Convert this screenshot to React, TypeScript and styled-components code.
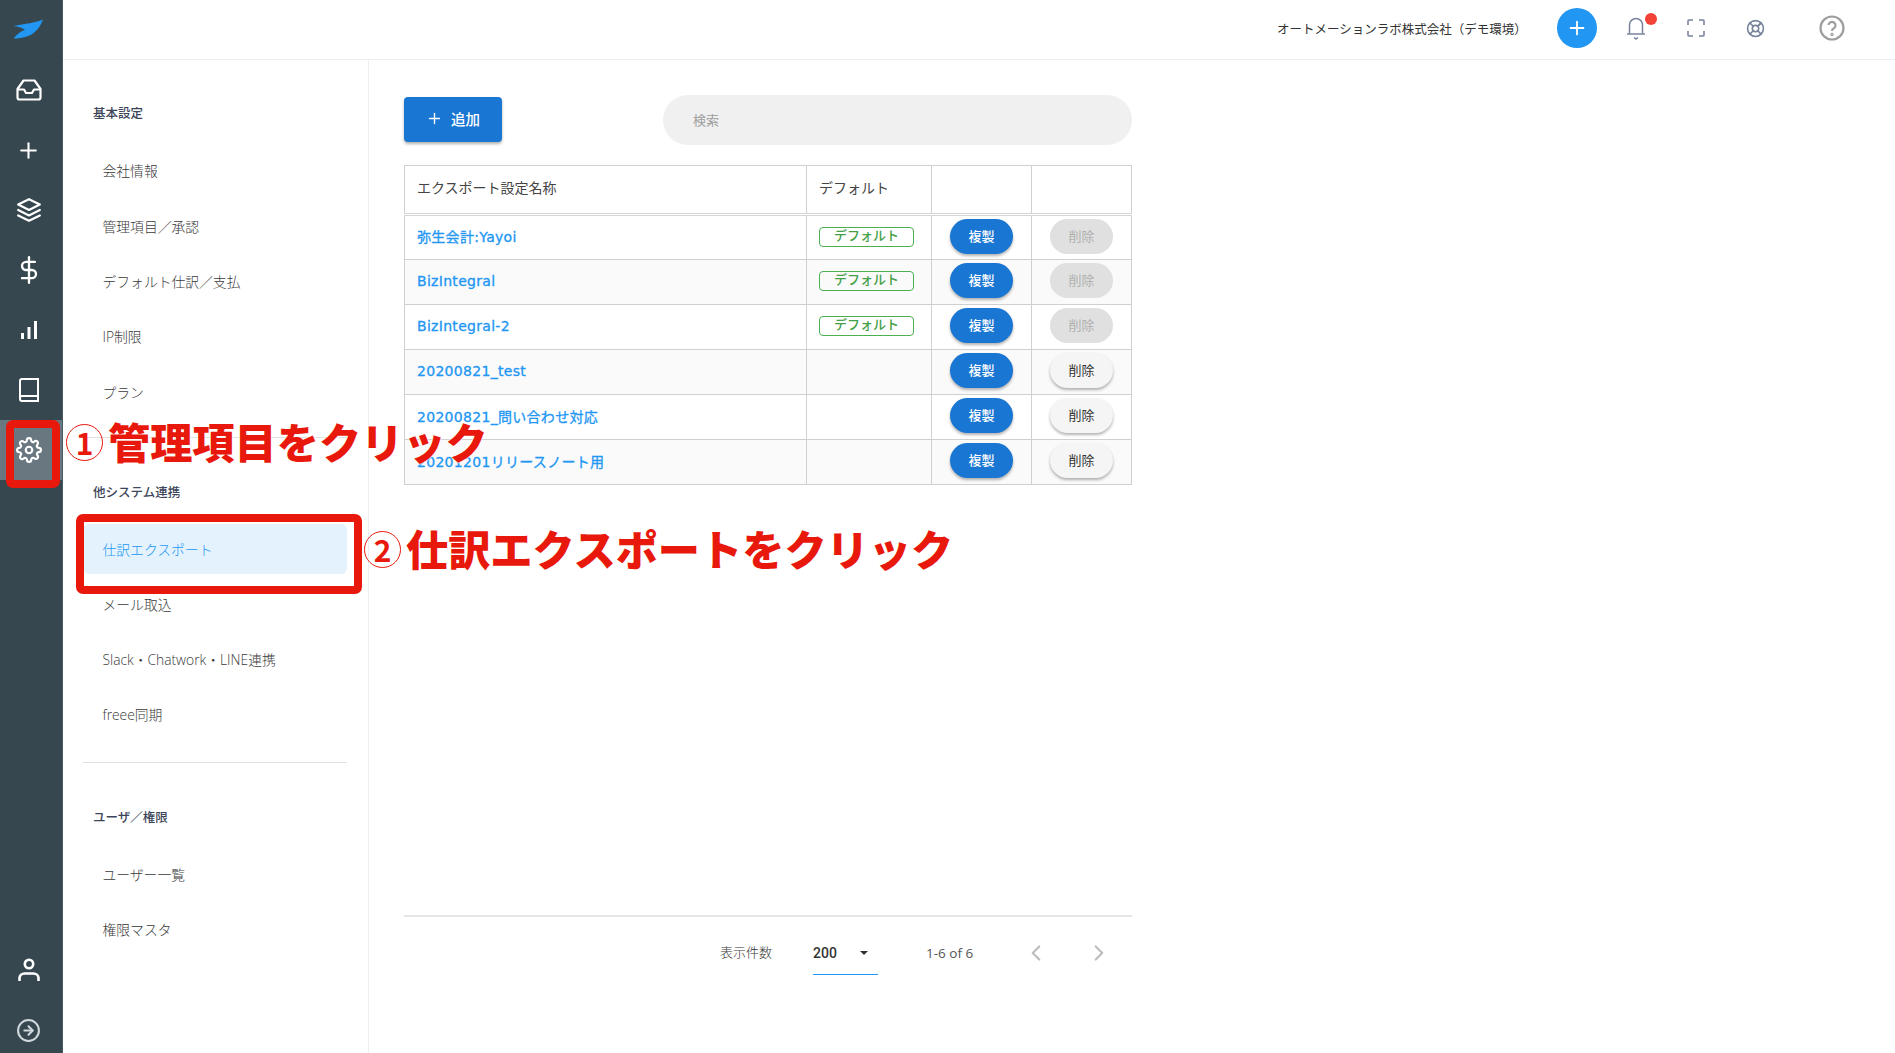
import React from "react";
import styled, { createGlobalStyle } from "styled-components";
import {
  FiArrowRightCircle,
  FiChevronLeft,
  FiChevronRight,
  FiDollarSign,
  FiLayers,
  FiLifeBuoy,
  FiPlus,
  FiSettings,
} from "react-icons/fi";

const GlobalStyle = createGlobalStyle`
  html, body {
    margin: 0;
    padding: 0;
    background: #fff;
  }
  body {
    font-family: Roboto, "Noto Sans CJK JP", sans-serif;
    color: #555;
  }
  * {
    box-sizing: border-box;
  }
`;

const Page = styled.div`
  position: relative;
  display: flex;
  width: 1895px;
  height: 1053px;
  overflow: hidden;
`;

const Rail = styled.nav`
  flex: 0 0 63px;
  display: flex;
  flex-direction: column;
  align-items: stretch;
  background: #37474f;
  border-right: 1px solid #455a64;
`;

const Logo = styled.div`
  height: 60px;
  display: flex;
  align-items: center;
  justify-content: center;
  padding: 0 5px 3px 0;
`;

const RailItem = styled.div<{ $active?: boolean }>`
  height: 60px;
  display: flex;
  align-items: center;
  justify-content: center;
  padding-right: 5px;
  color: #fff;
  background: ${(p) => (p.$active ? "#687780" : "transparent")};
`;

const RailExit = styled(RailItem)`
  height: 46px;
  margin-top: 7px;
`;

const RailSpacer = styled.div`
  flex: 1;
`;

const Main = styled.div`
  flex: 1;
  display: flex;
  flex-direction: column;
  min-width: 0;
`;

const TopBar = styled.header`
  height: 60px;
  flex: none;
  display: flex;
  align-items: center;
  padding: 0 0 3px 1214px;
  border-bottom: 1px solid #eceef0;
`;

const Company = styled.div`
  width: 280px;
  font-size: 12.5px;
  color: #333;
  white-space: nowrap;
`;

const RoundAdd = styled.div`
  width: 40px;
  height: 40px;
  margin-right: 29px;
  flex: none;
  border-radius: 50%;
  background: #2196f3;
  color: #fff;
  display: flex;
  align-items: center;
  justify-content: center;
`;

const TopIcon = styled.div<{ $width: number }>`
  position: relative;
  flex: none;
  width: ${(p) => p.$width}px;
  height: 40px;
  display: flex;
  align-items: center;
  color: #78839a;
`;

const Dot = styled.span`
  position: absolute;
  top: 5px;
  left: 19px;
  width: 12px;
  height: 12px;
  border-radius: 50%;
  background: #f44336;
`;

const Body = styled.div`
  flex: 1;
  display: flex;
  min-height: 0;
`;

const Menu = styled.aside`
  flex: 0 0 306px;
  padding: 27.4px 21px 0 20px;
  border-right: 1px solid #eceef0;
`;

const MenuHeading = styled.div`
  height: 58px;
  padding: 16px 0 0 10px;
  font-size: 12.5px;
  font-weight: 500;
  color: #3c4559;
`;

const MenuItem = styled.div<{ $active?: boolean }>`
  height: 50px;
  margin-bottom: 5.3px;
  display: flex;
  align-items: center;
  padding-left: 19.5px;
  border-radius: 6px;
  font-family: "Open Sans", "Noto Sans CJK JP", sans-serif;
  font-size: 13.8px;
  font-weight: 300;
  color: ${(p) => (p.$active ? "#2196f3" : "#3a3a3a")};
  background: ${(p) => (p.$active ? "#e3f2fd" : "transparent")};
`;

const MenuRule = styled.hr<{ $top: number; $bottom: number }>`
  margin: ${(p) => p.$top}px 0 ${(p) => p.$bottom}px;
  border: 0;
  border-top: 1px solid #e0e0e0;
`;

const Content = styled.section`
  width: 798px;
  padding: 35px 35px 46px;
  display: flex;
  flex-direction: column;
`;

const Tools = styled.div`
  display: flex;
  align-items: flex-start;
  justify-content: space-between;
  height: 50px;
  margin-bottom: 20px;
`;

const AddButton = styled.button`
  width: 98px;
  height: 45px;
  margin-top: 2px;
  border: 0;
  border-radius: 4px;
  display: flex;
  align-items: center;
  justify-content: center;
  gap: 8px;
  padding: 0 0 2px;
  background: #1976d2;
  color: #fff;
  font: 500 14.5px Roboto, "Noto Sans CJK JP", sans-serif;
  box-shadow: 0 2px 3px rgba(0, 0, 0, 0.3);
`;

const Search = styled.div`
  width: 469px;
  height: 50px;
  display: flex;
  align-items: center;
  padding: 0 0 2px 30px;
  border-radius: 25px;
  background: #f0f0f0;
  font-size: 13px;
  color: #9e9e9e;
`;

const Table = styled.table`
  width: 727px;
  border-collapse: collapse;
  table-layout: fixed;
  font-size: 14px;

  th,
  td {
    padding: 0 12px;
    border: 1px solid #d0d0d0;
    text-align: left;
  }

  th {
    height: 49px;
    padding-bottom: 5px;
    font-weight: 400;
    color: #444;
    border-bottom: 3px double #d6d6d6;
  }

  td {
    height: 45px;
  }

  tbody tr:nth-child(even) {
    background: #fafafa;
  }
`;

const LinkName = styled.a`
  display: block;
  padding-bottom: 3px;
  color: #2196f3;
  font-family: "DejaVu Sans", "Noto Sans CJK JP", sans-serif;
  font-size: 14px;
  letter-spacing: 0.3px;
  -webkit-text-stroke: 0.3px #2196f3;
  white-space: nowrap;
`;

const Chip = styled.span`
  display: block;
  width: 95px;
  height: 20px;
  margin-bottom: 2px;
  line-height: 15px;
  border: 1px solid #4caf50;
  border-radius: 4px;
  text-align: center;
  color: #43a047;
  font-size: 13px;
  font-weight: 500;
`;

const ActionCell = styled.td`
  && {
    padding: 0 0 3px;
    text-align: center;
  }
`;

const Pill = styled.button<{ $kind: "copy" | "remove" | "off" }>`
  width: 63px;
  height: 35px;
  border: 0;
  border-radius: 18px;
  padding: 0 0 2px;
  font: ${(p) => (p.$kind === "copy" ? 500 : 400)} 13px Roboto, "Noto Sans CJK JP", sans-serif;
  vertical-align: middle;
  color: ${(p) => (p.$kind === "copy" ? "#fff" : p.$kind === "off" ? "#b0b0b0" : "#333")};
  background: ${(p) => (p.$kind === "copy" ? "#1976d2" : p.$kind === "off" ? "#e0e0e0" : "#f5f5f5")};
  box-shadow: ${(p) => (p.$kind === "off" ? "none" : "0 2px 3px rgba(0, 0, 0, 0.3)")};
`;

const Footer = styled.footer`
  margin-top: auto;
  height: 92px;
  display: flex;
  align-items: flex-start;
  border-top: 2px solid #e6e6e6;
  padding: 26px 0 0 316px;
  font-size: 13px;
  color: #555;
`;

const PerPageLabel = styled.span`
  width: 93px;
  line-height: 20px;
  font-weight: 300;
  color: #333;
`;

const PerPage = styled.div`
  width: 65px;
  height: 32px;
  margin-right: 48px;
  display: flex;
  justify-content: space-between;
  padding: 0 10px 0 0;
  border-bottom: 1px solid #2196f3;
  font-size: 14px;
  font-weight: 500;
  line-height: 20px;
  color: #333;
`;

const Caret = styled.span`
  width: 0;
  height: 0;
  margin-top: 8px;
  border-style: solid;
  border-width: 4px 4px 0;
  border-color: #333 transparent transparent;
`;

const Range = styled.span`
  width: 97px;
  line-height: 20px;
  font-family: "Open Sans", sans-serif;
  font-size: 13.5px;
  white-space: nowrap;
`;

const Pager = styled.div`
  width: 89px;
  margin-top: -3px;
  display: flex;
  justify-content: space-between;
  color: #bdbdbd;
`;

const Frame = styled.div<{ $x: number; $y: number; $w: number; $h: number }>`
  position: absolute;
  left: ${(p) => p.$x}px;
  top: ${(p) => p.$y}px;
  width: ${(p) => p.$w}px;
  height: ${(p) => p.$h}px;
  border: 8px solid #e8190c;
  border-radius: 7px;
`;

const Callout = styled.div<{ $x: number; $y: number }>`
  position: absolute;
  left: ${(p) => p.$x}px;
  top: ${(p) => p.$y}px;
  display: flex;
  align-items: center;
  gap: 5px;
  font-size: 42.2px;
  line-height: 50px;
  font-weight: 900;
  font-family: "Noto Sans CJK JP", sans-serif;
  color: #e8190c;
  white-space: nowrap;
  text-shadow: 0 0 2px #fff, 0 0 2px #fff;
`;

const CalloutMark = styled.span`
  flex: none;
  width: 37px;
  height: 37px;
  margin-top: 2px;
  border: 1px solid #e8190c;
  border-radius: 50%;
  display: flex;
  align-items: center;
  justify-content: center;
  font-size: 30px;
  line-height: 1;
  font-weight: 700;
`;

const Bird = () => (
  <svg width="31" height="20" viewBox="0 0 31 20">
    <path
      d="M30 0.500C24 3.500 11 5 0.500 7C5 7.500 9.500 9 12 11C8 12 4 15 0.500 19.500C8 19.500 15 18 20 14.500C25 11 28 6 30 0.500Z"
      fill="#2196f3"
    />
  </svg>
);

const TrayIcon = () => (
  <svg width="26" height="22" viewBox="0 0 26 22" fill="none" stroke="currentColor" strokeWidth="2.2" strokeLinejoin="round">
    <path d="M7.500 1.500H18.500L24.500 10V18.500A2 2 0 0 1 22.500 20.500H3.500A2 2 0 0 1 1.500 18.500V10Z" />
    <path d="M1.500 10.500H8L10 14H16L18 10.500H24.500" />
  </svg>
);

const BarsIcon = () => (
  <svg width="18" height="20" viewBox="0 0 18 20" fill="currentColor">
    <rect x="1" y="13" width="3" height="6" />
    <rect x="7.500" y="7" width="3" height="12" />
    <rect x="14" y="1" width="3" height="18" />
  </svg>
);

const BookIcon = () => (
  <svg width="20" height="24" viewBox="0 0 20 24" fill="none" stroke="currentColor" strokeWidth="2">
    <path d="M3 1H19V23H3A2 2 0 0 1 1 21V3A2 2 0 0 1 3 1Z" />
    <path d="M1 19.500A2 2 0 0 1 3 18H19" />
  </svg>
);

const PersonIcon = () => (
  <svg width="22" height="24" viewBox="0 0 22 24" fill="none" stroke="currentColor" strokeWidth="2.600">
    <circle cx="11" cy="6" r="4.200" />
    <path d="M1.500 23V20A5 5 0 0 1 6.500 15.500H15.500A5 5 0 0 1 20.500 20V23" />
  </svg>
);

const BellIcon = () => (
  <svg width="20" height="24" viewBox="0 0 20 24" fill="none" stroke="currentColor" strokeWidth="1.500">
    <path d="M3.500 17.500V9A6.500 6.500 0 0 1 16.500 9V17.500" />
    <path d="M1 18H19" />
    <path d="M8 21.500L10 23L12 21.500" />
  </svg>
);

const FullscreenIcon = () => (
  <svg width="18" height="18" viewBox="0 0 18 18" fill="none" stroke="currentColor" strokeWidth="1.600">
    <path d="M6 1H2A1 1 0 0 0 1 2V6M12 1H16A1 1 0 0 1 17 2V6M1 12V16A1 1 0 0 0 2 17H6M17 12V16A1 1 0 0 1 16 17H12" />
  </svg>
);

const HelpIcon = () => (
  <svg width="26" height="26" viewBox="0 0 26 26" fill="none" stroke="#9e9e9e" strokeWidth="2.200">
    <circle cx="13" cy="13" r="11.500" />
    <path d="M9.500 10A3.500 3.500 0 1 1 14.500 13.500C13.500 14 13 14.700 13 16" />
    <circle cx="13" cy="19.500" r="0.600" />
  </svg>
);

const rows = [
  { name: "弥生会計:Yayoi", builtin: true },
  { name: "BizIntegral", builtin: true },
  { name: "BizIntegral-2", builtin: true },
  { name: "20200821_test", builtin: false },
  { name: "20200821_問い合わせ対応", builtin: false },
  { name: "20201201リリースノート用", builtin: false },
];

const App = () => {
  return (
    <Page>
      <GlobalStyle />
      <Rail>
        <Logo>
          <Bird />
        </Logo>
        <RailItem>
          <TrayIcon />
        </RailItem>
        <RailItem>
          <FiPlus size={25} />
        </RailItem>
        <RailItem>
          <FiLayers size={26} />
        </RailItem>
        <RailItem>
          <FiDollarSign size={28} />
        </RailItem>
        <RailItem>
          <BarsIcon />
        </RailItem>
        <RailItem>
          <BookIcon />
        </RailItem>
        <RailItem $active>
          <FiSettings size={26} />
        </RailItem>
        <RailSpacer />
        <RailItem>
          <PersonIcon />
        </RailItem>
        <RailExit>
          <FiArrowRightCircle size={25} color="#cfd8dc" />
        </RailExit>
      </Rail>
      <Main>
        <TopBar>
          <Company>オートメーションラボ株式会社（デモ環境）</Company>
          <RoundAdd>
            <FiPlus size={22} />
          </RoundAdd>
          <TopIcon $width={61}>
            <BellIcon />
            <Dot />
          </TopIcon>
          <TopIcon $width={59}>
            <FullscreenIcon />
          </TopIcon>
          <TopIcon $width={73}>
            <FiLifeBuoy size={19} />
          </TopIcon>
          <TopIcon $width={40}>
            <HelpIcon />
          </TopIcon>
        </TopBar>
        <Body>
          <Menu>
            <MenuHeading>基本設定</MenuHeading>
            <MenuItem>会社情報</MenuItem>
            <MenuItem>管理項目／承認</MenuItem>
            <MenuItem>デフォルト仕訳／支払</MenuItem>
            <MenuItem>IP制限</MenuItem>
            <MenuItem>プラン</MenuItem>
            <MenuRule $top={20} $bottom={28} />
            <MenuHeading>他システム連携</MenuHeading>
            <MenuItem $active>仕訳エクスポート</MenuItem>
            <MenuItem>メール取込</MenuItem>
            <MenuItem>Slack・Chatwork・LINE連携</MenuItem>
            <MenuItem>freee同期</MenuItem>
            <MenuRule $top={23} $bottom={27.4} />
            <MenuHeading>ユーザ／権限</MenuHeading>
            <MenuItem>ユーザー一覧</MenuItem>
            <MenuItem>権限マスタ</MenuItem>
          </Menu>
          <Content>
            <Tools>
              <AddButton>
                <FiPlus size={17} />
                追加
              </AddButton>
              <Search>検索</Search>
            </Tools>
            <Table>
              <colgroup>
                <col style={{ width: 402 }} />
                <col style={{ width: 125 }} />
                <col style={{ width: 100 }} />
                <col style={{ width: 100 }} />
              </colgroup>
              <thead>
                <tr>
                  <th>エクスポート設定名称</th>
                  <th>デフォルト</th>
                  <th />
                  <th />
                </tr>
              </thead>
              <tbody>
                {rows.map((row) => (
                  <tr key={row.name}>
                    <td>
                      <LinkName>{row.name}</LinkName>
                    </td>
                    <td>{row.builtin && <Chip>デフォルト</Chip>}</td>
                    <ActionCell>
                      <Pill $kind="copy">複製</Pill>
                    </ActionCell>
                    <ActionCell>
                      <Pill $kind={row.builtin ? "off" : "remove"}>削除</Pill>
                    </ActionCell>
                  </tr>
                ))}
              </tbody>
            </Table>
            <Footer>
              <PerPageLabel>表示件数</PerPageLabel>
              <PerPage>
                200
                <Caret />
              </PerPage>
              <Range>1-6 of 6</Range>
              <Pager>
                <FiChevronLeft size={26} />
                <FiChevronRight size={26} />
              </Pager>
            </Footer>
          </Content>
        </Body>
      </Main>
      <Frame $x={6} $y={420} $w={54} $h={68} />
      <Frame $x={76} $y={514} $w={286} $h={80} />
      <Callout $x={66} $y={416}>
        <CalloutMark>1</CalloutMark>
        管理項目をクリック
      </Callout>
      <Callout $x={364} $y={523}>
        <CalloutMark>2</CalloutMark>
        仕訳エクスポートをクリック
      </Callout>
    </Page>
  );
};

export default App;
